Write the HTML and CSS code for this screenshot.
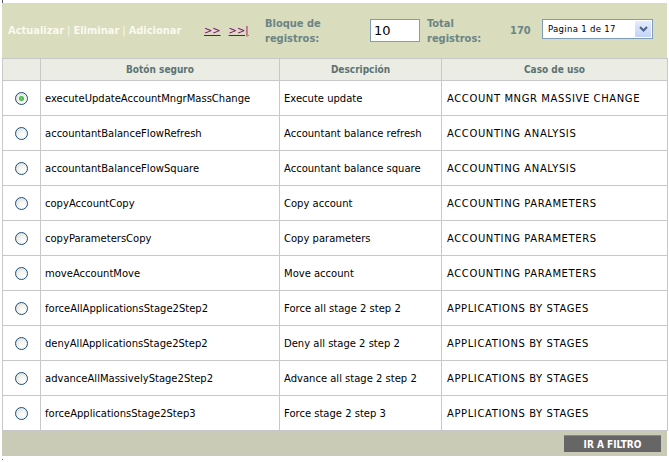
FILE: index.html
```html
<!DOCTYPE html>
<html>
<head>
<meta charset="utf-8">
<link rel="stylesheet" href="styles.css">
</head>
<body>
<div class="page">
  <span class="tick"></span>
  <div class="toolbar">
    <div class="actions">
      <a class="act">Actualizar</a><span class="sep">|</span><a class="act">Eliminar</a><span class="sep">|</span><a class="act">Adicionar</a>
    </div>
    <div class="nav">
      <a class="navlink">&gt;&gt;</a>
      <a class="navlink">&gt;&gt;|</a>
    </div>
    <div class="label lbl-block">Bloque de<br>registros:</div>
    <div class="input">10</div>
    <div class="label lbl-total">Total<br>registros:</div>
    <div class="count">170</div>
    <div class="select"><span class="sel-text">Pagina 1 de 17</span><span class="sel-btn"><svg width="9" height="6" viewBox="0 0 9 6"><path d="M1 1 L4.5 4.5 L8 1" fill="none" stroke="#4d6185" stroke-width="2"/></svg></span></div>
  </div>
  <table class="grid">
    <colgroup><col class="c1"><col class="c2"><col class="c3"><col class="c4"></colgroup>
    <thead>
      <tr><th></th><th>Botón seguro</th><th>Descripción</th><th>Caso de uso</th></tr>
    </thead>
    <tbody>
      <tr><td class="rc"><span class="radio on"></span></td><td>executeUpdateAccountMngrMassChange</td><td>Execute update</td><td class="caps">ACCOUNT MNGR MASSIVE CHANGE</td></tr>
      <tr><td class="rc"><span class="radio"></span></td><td>accountantBalanceFlowRefresh</td><td>Accountant balance refresh</td><td class="caps">ACCOUNTING ANALYSIS</td></tr>
      <tr><td class="rc"><span class="radio"></span></td><td>accountantBalanceFlowSquare</td><td>Accountant balance square</td><td class="caps">ACCOUNTING ANALYSIS</td></tr>
      <tr><td class="rc"><span class="radio"></span></td><td>copyAccountCopy</td><td>Copy account</td><td class="caps">ACCOUNTING PARAMETERS</td></tr>
      <tr><td class="rc"><span class="radio"></span></td><td>copyParametersCopy</td><td>Copy parameters</td><td class="caps">ACCOUNTING PARAMETERS</td></tr>
      <tr><td class="rc"><span class="radio"></span></td><td>moveAccountMove</td><td>Move account</td><td class="caps">ACCOUNTING PARAMETERS</td></tr>
      <tr><td class="rc"><span class="radio"></span></td><td>forceAllApplicationsStage2Step2</td><td>Force all stage 2 step 2</td><td class="caps">APPLICATIONS BY STAGES</td></tr>
      <tr><td class="rc"><span class="radio"></span></td><td>denyAllApplicationsStage2Step2</td><td>Deny all stage 2 step 2</td><td class="caps">APPLICATIONS BY STAGES</td></tr>
      <tr><td class="rc"><span class="radio"></span></td><td>advanceAllMassivelyStage2Step2</td><td>Advance all stage 2 step 2</td><td class="caps">APPLICATIONS BY STAGES</td></tr>
      <tr><td class="rc"><span class="radio"></span></td><td>forceApplicationsStage2Step3</td><td>Force stage 2 step 3</td><td class="caps">APPLICATIONS BY STAGES</td></tr>
    </tbody>
  </table>
  <div class="footer"><span class="btn">IR A FILTRO</span></div>
  <span class="dot"></span>
</div>
</body>
</html>
```

FILE: styles.css
```css
html, body { margin: 0; padding: 0; background: #fff; }
body { font-family: "DejaVu Sans", Verdana, sans-serif; font-size: 10px; color: #000; }
.page { position: relative; width: 669px; height: 462px; padding-left: 2px; padding-top: 3px; box-sizing: border-box; }
.tick { position: absolute; left: 2px; top: 0; width: 1px; height: 3px; background: #555; }
.dot { display: block; width: 1px; height: 1px; background: #777; margin-top: 3px; }

.toolbar { width: 665px; height: 55px; background: #d9dcbd; display: flex; align-items: center; box-sizing: border-box; padding-left: 6px; }
.actions { width: 196px; font-family: "DejaVu Sans Condensed", "DejaVu Sans", sans-serif; font-weight: bold; font-size: 11px; color: #fafaf0; white-space: nowrap; }
.act { color: #fafaf0; }
.sep { font-weight: normal; margin: 0 3px; color: #fafaf0; }
.nav { width: 61px; display: flex; gap: 8px; font-family: "DejaVu Sans Condensed", "DejaVu Sans", sans-serif; font-size: 11px; }
.navlink { color: #800080; text-decoration: underline; }
.label { font-family: "DejaVu Sans Condensed", "DejaVu Sans", sans-serif; font-weight: bold; font-size: 11px; line-height: 15px; color: #6b8585; }
.lbl-block { width: 105px; }
.input { width: 50px; height: 23px; box-sizing: border-box; border: 1px solid #7f9db9; background: #fff; font-family: "DejaVu Sans", sans-serif; font-size: 13px; line-height: 21px; padding-left: 3px; }
.lbl-total { margin-left: 7px; width: 83px; }
.count { font-family: "DejaVu Sans Condensed", "DejaVu Sans", sans-serif; font-weight: bold; font-size: 11px; color: #6b8585; width: 32px; }
.select { width: 111px; height: 20px; box-sizing: border-box; border: 1px solid #7f9db9; background: #fff; display: flex; align-items: center; justify-content: space-between; margin-top: -4px; }
.sel-text { font-family: "DejaVu Sans Condensed", "DejaVu Sans", sans-serif; font-size: 9.5px; padding-left: 5px; letter-spacing: 0.3px; }
.sel-btn { width: 16px; height: 16px; margin-right: 1px; background: linear-gradient(#e4ecfd, #c3d4fa); border-radius: 1px; display: flex; align-items: center; justify-content: center; }

.grid { border-collapse: collapse; width: 665px; table-layout: fixed; }
.c1 { width: 38px; } .c2 { width: 239px; } .c3 { width: 162px; } .c4 { width: 226px; }
.grid th, .grid td { border: 1px solid #c8c8c8; }
.grid th { height: 21px; padding: 0; background: #ebede4; font-family: "DejaVu Sans Condensed", "DejaVu Sans", sans-serif; font-weight: bold; font-size: 10px; color: #5b7373; text-align: center; }
.grid td { height: 34px; padding: 0 0 0 4px; white-space: nowrap; overflow: hidden; }
.grid td.caps { padding-left: 5px; letter-spacing: 0.6px; }
.grid td.rc { padding: 0; text-align: center; }
.radio { display: inline-block; width: 11px; height: 11px; border-radius: 50%; border: 1px solid #1c5180; background: radial-gradient(circle at 65% 70%, #fff 0, #f4f4f0 40%, #d8d8d0 100%); vertical-align: middle; position: relative; }
.radio.on::after { content: ""; position: absolute; left: 3px; top: 3px; width: 5px; height: 5px; border-radius: 50%; background: radial-gradient(circle, #6fd66f, #21a121); }

.footer { width: 665px; height: 25px; background: #c9cbb6; display: flex; align-items: center; justify-content: flex-end; box-sizing: border-box; padding-right: 6px; }
.btn { background: #666; color: #fff; font-family: "DejaVu Sans Condensed", "DejaVu Sans", sans-serif; font-weight: bold; font-size: 10px; width: 97px; height: 17px; line-height: 17px; text-align: center; border-top: 1px solid #888; box-sizing: border-box; }
```
